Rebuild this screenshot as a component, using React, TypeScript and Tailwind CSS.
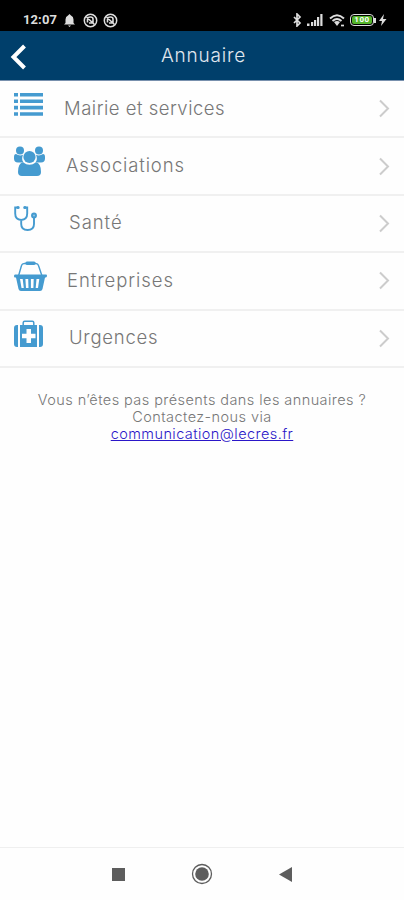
import type { ReactNode } from "react";

const rows: { label: string; text: string; icon: ReactNode }[] = [
  {
    label: "Mairie et services",
    text: "pl-[64px] tracking-[0.5px]",
    icon: (
      <svg className="w-[30px] h-[25px]" viewBox="0 0 30 25" fill="currentColor">
        <path d="M0 1h4v3.600H0zM6 1h23v3.600H6zM0 7.400h4V11H0zM6 7.400h23V11H6zM0 13.800h4v3.600H0zM6 13.800h23v3.600H6zM0 20.200h4v3.600H0zM6 20.200h23v3.600H6z" />
      </svg>
    ),
  },
  {
    label: "Associations",
    text: "pl-[66px] tracking-[0.85px]",
    icon: (
      <svg className="w-[32px] h-[31px]" viewBox="0 0 32 31" fill="currentColor">
        <circle cx="6" cy="4.500" r="4" />
        <circle cx="25" cy="4.500" r="4" />
        <path d="M0 11q0-3 2-3 3.500 2.500 7 .8Q7 13.500 9.500 16.500H4q-4 0-4-4zM31 11q0-3-2-3-3.500 2.500-7 .8 2 4.700-.5 7.700H27q4 0 4-4z" />
        <circle cx="15.500" cy="11" r="6.100" />
        <path d="M9 16.200q6.500 5 13 0 5 1 5 9.800 0 4-4 4H8q-4 0-4-4 0-8.800 5-9.800z" />
      </svg>
    ),
  },
  {
    label: "Santé",
    text: "pl-[69px] tracking-[0.95px]",
    icon: (
      <svg
        className="w-[24px] h-[27px]"
        viewBox="0 0 24 27"
        fill="none"
        stroke="currentColor"
        strokeWidth="1.900"
        strokeLinecap="round"
      >
        <path d="M3.500 2.500H1.200v6q0 6 6 6.500 6-.5 6-6.500v-6H11M7.200 15v4q0 6 6.400 6t6.400-6v-6" />
        <path d="M4 2.500h.1M10.800 2.500h.1" strokeWidth="3.200" />
        <circle cx="20" cy="10.500" r="2" fill="#8cc3e4" />
      </svg>
    ),
  },
  {
    label: "Entreprises",
    text: "pl-[67px] tracking-[0.95px]",
    icon: (
      <svg className="w-[34px] h-[31px]" viewBox="0 0 34 31" fill="none" stroke="currentColor">
        <path d="M4.500 15 7.500 4.500Q8 2.500 10.500 2.500h11q2.500 0 3 2l3.500 10.500" strokeWidth="1.400" />
        <path d="M13 2.200h7" strokeWidth="3.400" strokeLinecap="round" />
        <path
          fill="currentColor"
          stroke="none"
          fillRule="evenodd"
          d="M1 13.500h31q1 0 1 1.300t-1 1.700h-1L28.500 28q-.5 2-2.500 2H7q-2 0-2.500-2L2 16.500H1q-1 0-1-1.500t1-1.500zM6 18l1.500 9h2.300L8.700 18zM11.400 18l.6 9h2.500l-.3-9zM16.900 18v9h2.500l.3-9zM22.500 18l-.8 9H24l1.300-9z"
        />
      </svg>
    ),
  },
  {
    label: "Urgences",
    text: "pl-[69px] tracking-[0.75px]",
    icon: (
      <svg className="w-[30px] h-[28px]" viewBox="0 0 30 28" fill="currentColor">
        <path d="M9.200 6V2.800q0-1.500 1.500-1.500h7.600q1.500 0 1.500 1.500V6" fill="none" stroke="currentColor" strokeWidth="1.500" />
        <path d="M4 5v22H3q-3 0-3-3V8q0-3 3-3zM25 5v22h1q3 0 3-3V8q0-3-3-3z" />
        <path
          fillRule="evenodd"
          d="M6 5h17v22H6zM12.500 9v4.800H8v4.400h4.500V23H17v-4.800h4.500v-4.400H17V9z"
        />
      </svg>
    ),
  },
];

function MutedIcon() {
  return (
    <svg className="w-[15px] h-[15px]" viewBox="0 0 15 15" fill="none" stroke="#ddd">
      <circle cx="7.500" cy="7.500" r="6.200" strokeWidth="1.500" />
      <path d="M4.500 9.500V6q0-2 3-2 2.500 0 2.500 2v4H6M3.500 4l8 7.500" strokeWidth="1.600" />
    </svg>
  );
}

function StatusBar() {
  return (
    <div className="h-[31px] bg-black flex items-center pt-[9px] pl-[23px] pr-[17px] text-[#ddd]">
      <span className="w-[34px] font-['Roboto',sans-serif] font-bold text-[13px] tracking-[0.100px] whitespace-nowrap">
        12:07
      </span>
      <svg className="ml-[7px] w-[11px] h-[13px]" viewBox="0 0 11 13" fill="currentColor">
        <path d="M5.500 0 7 1.500q2.500 1 2.500 4V9l1.500 1.500H0L1.500 9V5.500q0-3 2.500-4zM4 11.500h3L5.500 13z" />
      </svg>
      <div className="ml-[8px] flex gap-[5px]">
        <MutedIcon />
        <MutedIcon />
      </div>
      {/* SIGNALS */}
      <svg className="ml-auto w-[9px] h-[14px]" viewBox="0 0 9 14" fill="none" stroke="currentColor" strokeWidth="1.700">
        <path d="m1 4 6 6-3 3V1l3 3-6 6" />
      </svg>
      <svg className="ml-[5px] w-[16px] h-[12px]" viewBox="0 0 16 12" fill="currentColor">
        <path d="M0 9.500h2.500V12H0zM4 8h2.200v4H4zM7 6h2.200v6H7zM10 3h2.200v9H10zM13.300 0h2.200v12h-2.200z" />
      </svg>
      <svg className="ml-[6px] w-[17px] h-[13px]" viewBox="0 0 17 13" fill="none" stroke="currentColor" strokeWidth="1.900">
        <path d="M1 4.500q7-6.500 14 0M3.500 7q4.500-4 9 0" />
        <path d="m5 8 3 4 3-4q-3-2-6 0z" fill="currentColor" stroke="none" />
        <path d="M12 11.500h3" strokeWidth="1.700" />
      </svg>
      <div className="ml-[4px] w-[24px] h-[12px] p-[1px] border-[1.500px] border-[#ddd] rounded-[4px]">
        <div className="h-full rounded-[2px] bg-[#55b52b] flex items-center justify-center font-['Roboto',sans-serif] text-[8px] font-bold leading-none tracking-[0.500px] text-white">
          100
        </div>
      </div>
      <div className="w-[2px] h-[5px] bg-[#ddd]" />
      <svg className="ml-[3px] w-[8px] h-[12px]" viewBox="0 0 8 12" fill="currentColor">
        <path d="M5 0 0 7h3l-1 5 5.500-7H4z" />
      </svg>
    </div>
  );
}

export default function App() {
  return (
    <div className="w-[404px] h-[900px] flex flex-col overflow-hidden bg-[#fefefe] font-['Inter',sans-serif]">
      <StatusBar />

      {/* HEADER */}
      <header className="h-[50px] bg-[#003f6b] border-b border-[#7890ad] grid grid-cols-[40px_1fr_40px] items-center">
        <svg
          className="ml-[10px] mt-[2px] w-[17px] h-[26px]"
          viewBox="0 0 17 26"
          fill="none"
          stroke="white"
          strokeWidth="4"
        >
          <path d="M14.500 2 3.500 13l11 11" />
        </svg>
        <h1 className="text-center font-light text-[19px] leading-6 tracking-[0.800px] text-[#e0e8ef] pl-[3px]">
          Annuaire
        </h1>
      </header>

      {/* DIRECTORY */}
      <ul>
        {rows.map((row) => (
          <li
            key={row.label}
            className="grid h-[57.400px] items-center border-b-2 border-[#f0f0f0] text-[#777]"
          >
            <div className="col-start-1 row-start-1 ml-[14px] -mt-[9px] text-[#459bd0]">
              {row.icon}
            </div>
            <span
              className={`col-start-1 row-start-1 -mt-[2px] font-light text-[18.500px] leading-6 whitespace-nowrap ${row.text}`}
            >
              {row.label}
            </span>
            <svg
              className="col-start-1 row-start-1 justify-self-end mr-[13px] w-[13px] h-[19px]"
              viewBox="0 0 13 19"
              fill="none"
              stroke="#ccc"
              strokeWidth="2"
            >
              <path d="m2 1.500 8 8-8 8" />
            </svg>
          </li>
        ))}
      </ul>

      <div className="mt-[23px] text-center font-light text-[14.500px] leading-[17.500px] text-[#777]">
        <p className="tracking-[0.430px]">Vous n’êtes pas présents dans les annuaires ?</p>
        <p className="tracking-[0.430px]">Contactez-nous via</p>
        <a
          href="mailto:communication@lecres.fr"
          className="block w-fit mx-auto -mt-px tracking-[0.430px] text-[#2a16c8] underline"
        >
          communication@lecres.fr
        </a>
      </div>

      {/* NAVIGATION */}
      <nav className="mt-auto h-[53px] border-t border-[#efefef] flex items-center justify-center gap-[66px] text-[#5d5d5d]">
        <div className="w-[13px] h-[13px] bg-[#5d5d5d]" />
        <svg className="w-[22px] h-[22px]" viewBox="0 0 22 22">
          <circle cx="11" cy="11" r="9.500" fill="none" stroke="currentColor" strokeWidth="1.300" />
          <circle cx="11" cy="11" r="6.800" fill="currentColor" />
        </svg>
        <svg className="w-[13px] h-[15px]" viewBox="0 0 13 15" fill="currentColor">
          <path d="M13 0v15L0 7.500z" />
        </svg>
      </nav>
    </div>
  );
}
